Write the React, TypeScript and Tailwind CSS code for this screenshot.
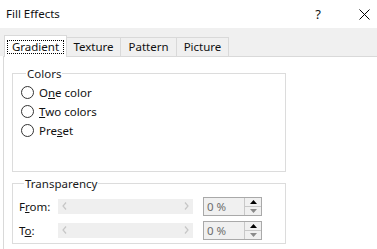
import React from "react";

function Radio({ children }: { children: React.ReactNode }) {
  return (
    <div className="flex items-center h-[19px] gap-[5px]">
      <span className="w-[13px] h-[13px] rounded-full border border-[#333333] bg-white shrink-0" />
      <span className="leading-[15px]">{children}</span>
    </div>
  );
}

function Chevron({ dir }: { dir: "l" | "r" }) {
  return (
    <svg width="5" height="8" viewBox="0 0 5 8" className="shrink-0">
      {dir === "l" ? (
        <path d="M4 0.5 L1 4 L4 7.5" fill="none" stroke="#c6c6c6" strokeWidth="1.2" />
      ) : (
        <path d="M1 0.5 L4 4 L1 7.5" fill="none" stroke="#c6c6c6" strokeWidth="1.2" />
      )}
    </svg>
  );
}

function Row({ label }: { label: React.ReactNode }) {
  return (
    <div className="flex items-center h-[20px]">
      <span className="w-[39px] leading-[15px]">{label}</span>
      <div className="w-[135px] h-[15px] bg-[#efefef] flex items-center justify-between px-[4px]">
        <Chevron dir="l" />
        <Chevron dir="r" />
      </div>
      <div className="ml-[10px] w-[59px] h-[19px] border border-[#a9a9a9] bg-[#f0f0f0] flex">
        <div className="flex-1 flex items-center pl-[3px] text-[#6d6d6d] leading-[15px]">0 %</div>
        <div className="w-[17px] flex flex-col border-l border-[#c8c8c8]">
          <div className="flex-1 flex items-center justify-center border-b border-[#c8c8c8]">
            <svg width="7" height="4" viewBox="0 0 7 4">
              <path d="M0 4 L3.5 0 L7 4 Z" fill="#000000" />
            </svg>
          </div>
          <div className="flex-1 flex items-center justify-center">
            <svg width="7" height="4" viewBox="0 0 7 4">
              <path d="M0 0 L3.5 4 L7 0 Z" fill="#8a8a8a" />
            </svg>
          </div>
        </div>
      </div>
    </div>
  );
}

export default function App() {
  return (
    <div
      className="w-[377px] h-[249px] bg-white overflow-hidden flex flex-col text-[11.5px] text-[#111111]"
      style={{ fontFamily: '"Noto Sans", "Open Sans", sans-serif' }}
    >
      {/* Title bar */}
      <div className="h-[28px] flex items-center pl-[6px] shrink-0">
        <span className="leading-[16px]">Fill Effects</span>
        <span className="ml-auto mr-[38px] text-[13px] leading-[16px]">?</span>
        <svg width="11" height="11" viewBox="0 0 11 11" className="mr-[7px]">
          <path d="M0.5 0.5 L10.5 10.5 M10.5 0.5 L0.5 10.5" stroke="#000" strokeWidth="1" />
        </svg>
      </div>

      {/* Tab strip */}
      <div className="h-[28px] bg-[#f0f0f0] flex items-end pl-[4px] shrink-0">
        <div className="relative z-10 -mb-px h-[22px] w-[63px] bg-white border-l border-t border-r border-[#d9d9d9] flex items-center justify-center">
          <span className="border border-dotted border-black px-[4px] leading-[12px] h-[14px] flex items-center">
            Gradient
          </span>
        </div>
        <div className="h-[19px] w-[54px] border-t border-r border-[#d9d9d9] flex items-center justify-center">
          Texture
        </div>
        <div className="h-[19px] w-[56px] border-t border-r border-[#d9d9d9] flex items-center justify-center">
          Pattern
        </div>
        <div className="h-[19px] w-[52px] border-t border-r border-[#d9d9d9] flex items-center justify-center">
          Picture
        </div>
      </div>

      {/* Panel */}
      <div className="flex-1 ml-[3px] border-l border-t border-[#d9d9d9] flex flex-col pl-[8px]">
        <fieldset className="mt-[9px] w-[274px] h-[106px] border border-[#dcdcdc] pl-[8px] pt-[2px]">
          <legend className="ml-[5px] px-[1px] leading-[15px] text-[#1a1a1a]">Colors</legend>
          <Radio>
            O<u>n</u>e color
          </Radio>
          <Radio>
            <u>T</u>wo colors
          </Radio>
          <Radio>
            Pre<u>s</u>et
          </Radio>
        </fieldset>
        <fieldset className="mt-[4px] w-[274px] h-[68px] border border-[#dcdcdc] pl-[6px] pt-[5px] flex flex-col gap-[4px]">
          <legend className="ml-[5px] px-[1px] leading-[15px] text-[#1a1a1a]">Transparency</legend>
          <Row
            label={
              <>
                F<u>r</u>om:
              </>
            }
          />
          <Row
            label={
              <>
                T<u>o</u>:
              </>
            }
          />
        </fieldset>
      </div>
    </div>
  );
}
